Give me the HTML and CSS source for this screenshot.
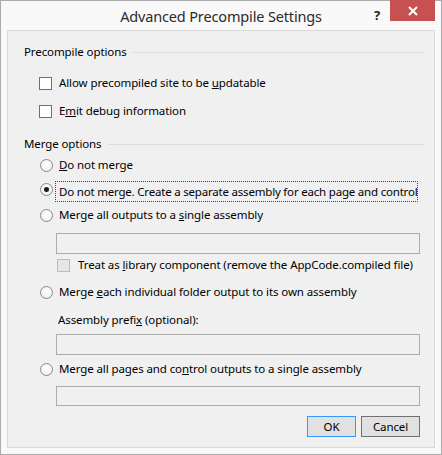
FILE: index.html
```html
<!DOCTYPE html>
<html>
<head>
<meta charset="utf-8">
<link rel="stylesheet" href="styles.css">
</head>
<body>
<div class="window">
  <div class="titlebar">
    <div class="title">Advanced Precompile Settings</div>
    <div class="help">?</div>
    <div class="close">
      <svg width="10" height="10" viewBox="0 0 10 10"><path d="M1 1L9 9M9 1L1 9" stroke="#fff" stroke-width="2"/></svg>
    </div>
  </div>
  <div class="client">
    <div class="group-head r-a"><span>Precompile options</span><div class="rule"></div></div>
    <div class="row check-row r-b"><span class="cb"></span><span>Allow precompiled site to be <u>u</u>pdatable</span></div>
    <div class="row check-row r-c"><span class="cb"></span><span>E<u>m</u>it debug information</span></div>
    <div class="group-head r-d"><span>Merge options</span><div class="rule"></div></div>
    <div class="row radio-row r-e"><span class="rb"></span><span><u>D</u>o not merge</span></div>
    <div class="row radio-row r-f"><span class="rb checked"></span><span class="focus">Do not merge. Create a separate assembly for each pa<u>g</u>e and control</span></div>
    <div class="row radio-row r-g"><span class="rb"></span><span>Merge all outputs to a <u>s</u>ingle assembly</span></div>
    <div class="textbox r-h"></div>
    <div class="row sub-check r-i"><span class="cb disabled"></span><span>Treat as <u>l</u>ibrary component (remove the AppCode.compiled file)</span></div>
    <div class="row radio-row r-j"><span class="rb"></span><span>Merge <u>e</u>ach individual folder output to its own assembly</span></div>
    <div class="row label-row r-k"><span>Assembly prefi<u>x</u> (optional):</span></div>
    <div class="textbox r-l"></div>
    <div class="row radio-row r-m"><span class="rb"></span><span>Merge all pages and co<u>n</u>trol outputs to a single assembly</span></div>
    <div class="textbox tb-short r-n"></div>
    <div class="buttons">
      <div class="btn default">OK</div>
      <div class="btn">Cancel</div>
    </div>
  </div>
</div>
</body>
</html>
```
FILE: styles.css
```css
* { box-sizing: border-box; }
html, body { margin: 0; padding: 0; }
body {
  width: 442px;
  height: 455px;
  font-family: "Noto Sans", "Open Sans", sans-serif;
  font-size: 11.5px;
  letter-spacing: -0.1px;
  color: #000;
  background: #fff;
}
.window {
  width: 442px;
  height: 455px;
  border: 1px solid #ababab;
  background: #f9f9f9;
  padding: 0 6px 6px 6px;
  display: flex;
  flex-direction: column;
}
.titlebar {
  position: relative;
  height: 29px;
  flex: none;
}
.title {
  text-align: center;
  font-size: 14.5px;
  letter-spacing: -0.15px;
  line-height: 29px;
  padding-top: 1px;
  color: #2b2b2b;
  padding-right: 0;
}
.help {
  position: absolute;
  left: 367px;
  top: 5px;
  font-weight: bold;
  font-size: 13px;
  color: #222;
}
.close {
  position: absolute;
  left: 383px;
  top: -1px;
  width: 45px;
  height: 21px;
  background: #c75050;
  display: flex;
  align-items: center;
  justify-content: center;
}
.close svg { display: block; }
.client {
  flex: 1;
  border: 1px solid #dadada;
  background: #f0f0f0;
  padding: 0 14px 0 0;
  display: flex;
  flex-direction: column;
}
.row {
  display: flex;
  align-items: center;
  height: 16px;
  line-height: 16px;
  white-space: nowrap;
}
.group-head {
  display: flex;
  align-items: center;
  height: 16px;
  line-height: 16px;
  padding-left: 16px;
}
.group-head .rule {
  flex: 1;
  height: 1px;
  background: #dcdcdc;
  margin-left: 6px;
  margin-right: -5px;
}
.cb {
  width: 13px;
  height: 13px;
  border: 1px solid #707070;
  background: #fff;
  flex: none;
  margin-right: 7px;
}
.cb.disabled {
  border-color: #bcbcbc;
  background: #e6e6e6;
  margin-right: 8px;
}
.check-row { padding-left: 31px; }
.sub-check { padding-left: 49px; }
.radio-row { padding-left: 32px; }
.label-row { padding-left: 50px; }
.rb {
  width: 13px;
  height: 13px;
  border-radius: 50%;
  border: 1px solid #8a8a8a;
  background: radial-gradient(circle at 50% 40%, #ffffff 0%, #f4f4f4 60%, #e2e2e2 100%);
  flex: none;
  margin-right: 6px;
  position: relative;
}
.rb.checked::after {
  content: "";
  position: absolute;
  left: 3px;
  top: 3px;
  width: 5px;
  height: 5px;
  border-radius: 50%;
  background: #1a1a1a;
}
.focus {
  border: 1px dotted #444;
  height: 21px;
  line-height: 19px;
  padding: 0 0 0 3px;
  margin-left: -4px;
  letter-spacing: -0.2px;
}
.r-f .rb { margin-top: -4px; }
.textbox {
  margin-left: 48px;
  width: 364px;
  height: 21px;
  border: 1px solid #acacac;
  background: #f0f0f0;
  flex: none;
}
.tb-short { height: 20px; }
.r-a { margin-top: 13px; }
.r-b { margin-top: 15px; }
.r-c { margin-top: 12px; }
.r-d { margin-top: 17px; }
.r-e { margin-top: 5px; }
.r-f { margin-top: 8px; height: 21px; }
.r-g { margin-top: 5px; }
.r-h { margin-top: 10px; }
.r-i { margin-top: 3px; }
.r-j { margin-top: 11px; }
.r-k { margin-top: 12px; }
.r-l { margin-top: 6px; }
.r-m { margin-top: 6px; }
.r-n { margin-top: 9px; }
.buttons {
  display: flex;
  justify-content: flex-end;
  gap: 5px;
  margin-top: 10px;
}
.btn {
  height: 21px;
  line-height: 19px;
  text-align: center;
  background: #e1e1e1;
  border: 1px solid #707070;
  width: 59px;
}
.btn.default {
  width: 49px;
  border-color: #3399ff;
}
```
